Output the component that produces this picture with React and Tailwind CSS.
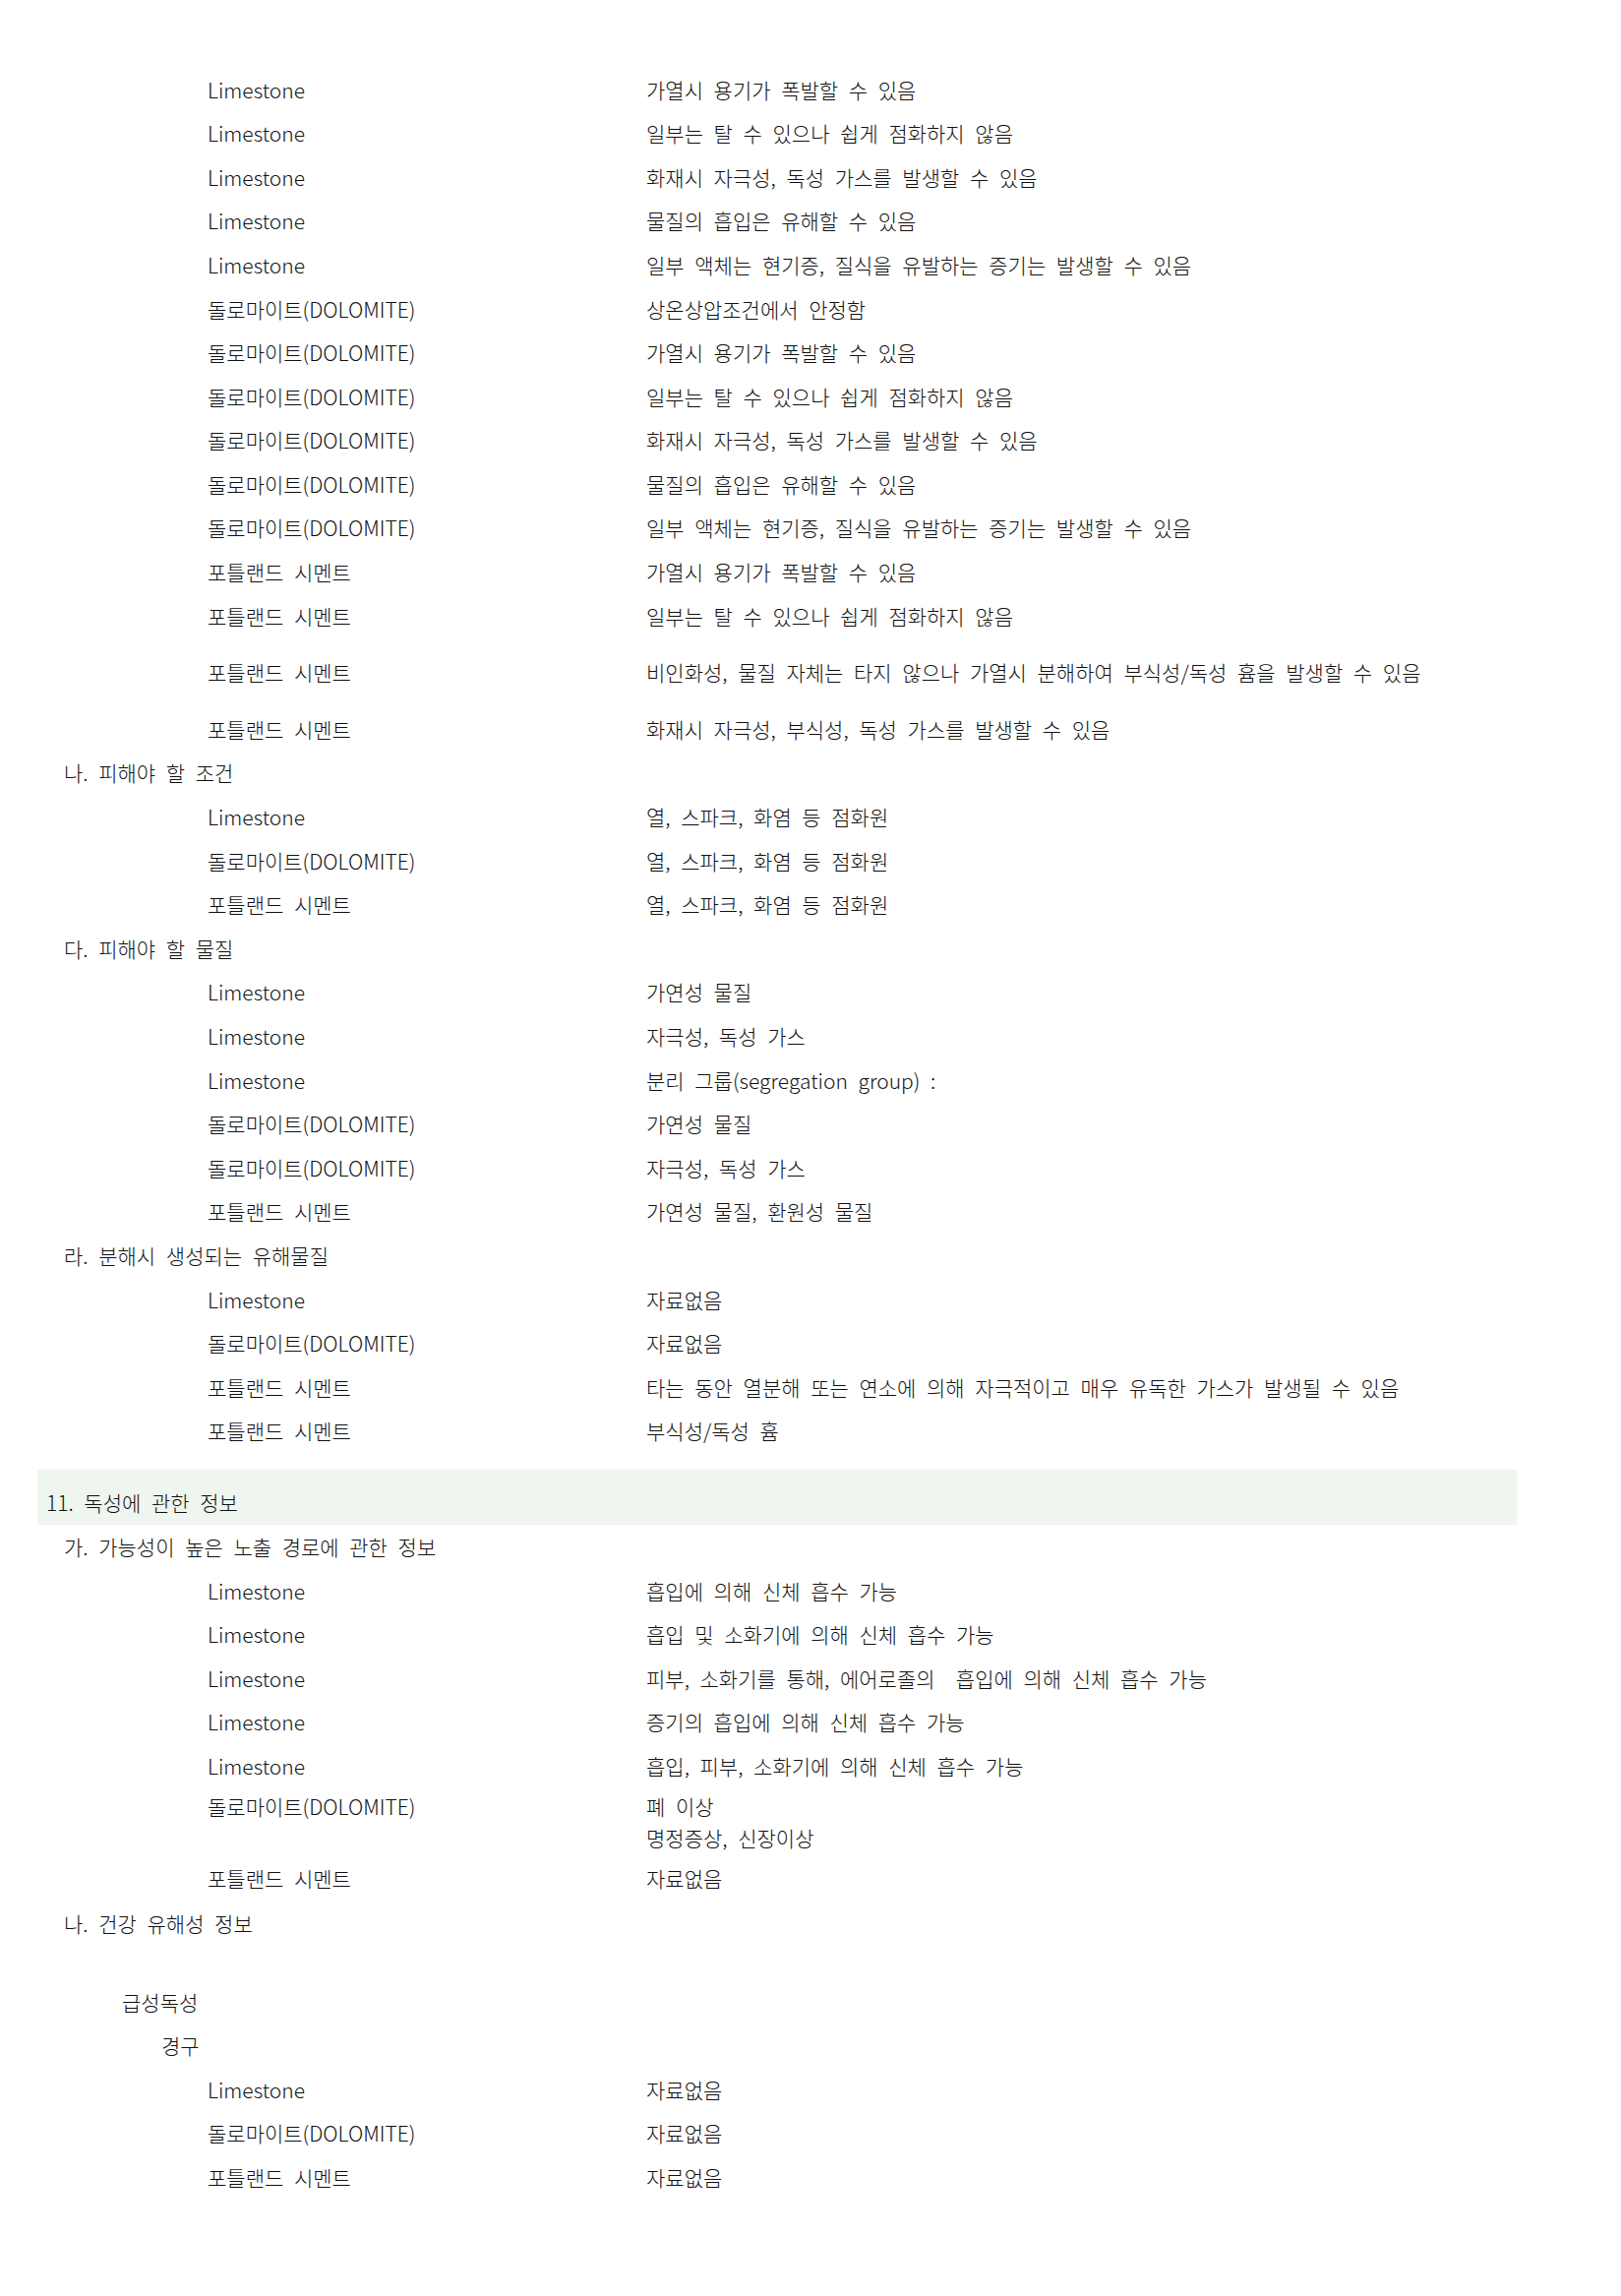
import React from "react";

const LIME = "Limestone";
const DOLO = "돌로마이트(DOLOMITE)";
const PORT = "포틀랜드 시멘트";

// each entry: kind, texts, extra top margin in px
const sectionTen = [
    { kind: "row", a: LIME, b: "가열시 용기가 폭발할 수 있음" },
    { kind: "row", a: LIME, b: "일부는 탈 수 있으나 쉽게 점화하지 않음" },
    { kind: "row", a: LIME, b: "화재시 자극성, 독성 가스를 발생할 수 있음" },
    { kind: "row", a: LIME, b: "물질의 흡입은 유해할 수 있음" },
    { kind: "row", a: LIME, b: "일부 액체는 현기증, 질식을 유발하는 증기는 발생할 수 있음" },
    { kind: "row", a: DOLO, b: "상온상압조건에서 안정함" },
    { kind: "row", a: DOLO, b: "가열시 용기가 폭발할 수 있음" },
    { kind: "row", a: DOLO, b: "일부는 탈 수 있으나 쉽게 점화하지 않음" },
    { kind: "row", a: DOLO, b: "화재시 자극성, 독성 가스를 발생할 수 있음" },
    { kind: "row", a: DOLO, b: "물질의 흡입은 유해할 수 있음" },
    { kind: "row", a: DOLO, b: "일부 액체는 현기증, 질식을 유발하는 증기는 발생할 수 있음" },
    { kind: "row", a: PORT, b: "가열시 용기가 폭발할 수 있음" },
    { kind: "row", a: PORT, b: "일부는 탈 수 있으나 쉽게 점화하지 않음" },
    { kind: "row", a: PORT, b: "비인화성, 물질 자체는 타지 않으나 가열시 분해하여 부식성/독성 흄을 발생할 수 있음", gap: "mt-[13px]" },
    { kind: "row", a: PORT, b: "화재시 자극성, 부식성, 독성 가스를 발생할 수 있음", gap: "mt-[13px]" },
    { kind: "sub", text: "나. 피해야 할 조건" },
    { kind: "row", a: LIME, b: "열, 스파크, 화염 등 점화원" },
    { kind: "row", a: DOLO, b: "열, 스파크, 화염 등 점화원" },
    { kind: "row", a: PORT, b: "열, 스파크, 화염 등 점화원" },
    { kind: "sub", text: "다. 피해야 할 물질" },
    { kind: "row", a: LIME, b: "가연성 물질" },
    { kind: "row", a: LIME, b: "자극성, 독성 가스" },
    { kind: "row", a: LIME, b: "분리 그룹(segregation group) :" },
    { kind: "row", a: DOLO, b: "가연성 물질" },
    { kind: "row", a: DOLO, b: "자극성, 독성 가스" },
    { kind: "row", a: PORT, b: "가연성 물질, 환원성 물질" },
    { kind: "sub", text: "라. 분해시 생성되는 유해물질" },
    { kind: "row", a: LIME, b: "자료없음" },
    { kind: "row", a: DOLO, b: "자료없음" },
    { kind: "row", a: PORT, b: "타는 동안 열분해 또는 연소에 의해 자극적이고 매우 유독한 가스가 발생될 수 있음" },
    { kind: "row", a: PORT, b: "부식성/독성 흄" },
];

const sectionEleven = [
    { kind: "sub", text: "가. 가능성이 높은 노출 경로에 관한 정보" },
    { kind: "row", a: LIME, b: "흡입에 의해 신체 흡수 가능" },
    { kind: "row", a: LIME, b: "흡입 및 소화기에 의해 신체 흡수 가능" },
    { kind: "row", a: LIME, b: "피부, 소화기를 통해, 에어로졸의\u00a0 흡입에 의해 신체 흡수 가능" },
    { kind: "row", a: LIME, b: "증기의 흡입에 의해 신체 흡수 가능" },
    { kind: "row", a: LIME, b: "흡입, 피부, 소화기에 의해 신체 흡수 가능" },
    { kind: "multi", a: DOLO, lines: ["폐 이상", "명정증상, 신장이상"] },
    { kind: "row", a: PORT, b: "자료없음" },
    { kind: "sub", text: "나. 건강 유해성 정보", gap: "mt-[2px]" },
    { kind: "label", text: "급성독성", indent: "pl-[124px]", gap: "mt-[35px]" },
    { kind: "label", text: "경구", indent: "pl-[164px]" },
    { kind: "row", a: LIME, b: "자료없음" },
    { kind: "row", a: DOLO, b: "자료없음" },
    { kind: "row", a: PORT, b: "자료없음" },
];

const Entry = ({ item }) => {
    const gap = item.gap || "";
    if (item.kind === "sub") {
        return (
            <div className={`h-[44.6px] flex items-center pl-[65px] ${gap}`}>
                {item.text}
            </div>
        );
    }
    if (item.kind === "label") {
        return (
            <div className={`h-[44.6px] flex items-center ${item.indent} ${gap}`}>
                {item.text}
            </div>
        );
    }
    if (item.kind === "multi") {
        return (
            <div className={`h-[69px] flex pl-[211px] pt-[2px] leading-[32px] ${gap}`}>
                <div className="w-[446px] shrink-0">{item.a}</div>
                <div>
                    {item.lines.map((line, i) => (
                        <div key={i}>{line}</div>
                    ))}
                </div>
            </div>
        );
    }
    return (
        <div className={`h-[44.6px] flex items-center pl-[211px] ${gap}`}>
            <div className="w-[446px] shrink-0">{item.a}</div>
            <div className="whitespace-nowrap">{item.b}</div>
        </div>
    );
};

export default function App() {
    return (
        <div className="min-h-screen bg-white text-[#111] text-[21px] font-light [word-spacing:6px] font-['Noto_Sans_CJK_KR','Noto_Sans',sans-serif] pt-[69px] pb-[80px]">
            {sectionTen.map((item, i) => (
                <Entry key={i} item={item} />
            ))}
            <div className="mt-[17px] ml-[38px] w-[1504px] h-[56px] bg-[#eff5ef] flex items-center pt-[10px] pl-[9px]">
                11. 독성에 관한 정보
            </div>
            {sectionEleven.map((item, i) => (
                <Entry key={i} item={item} />
            ))}
        </div>
    );
}
